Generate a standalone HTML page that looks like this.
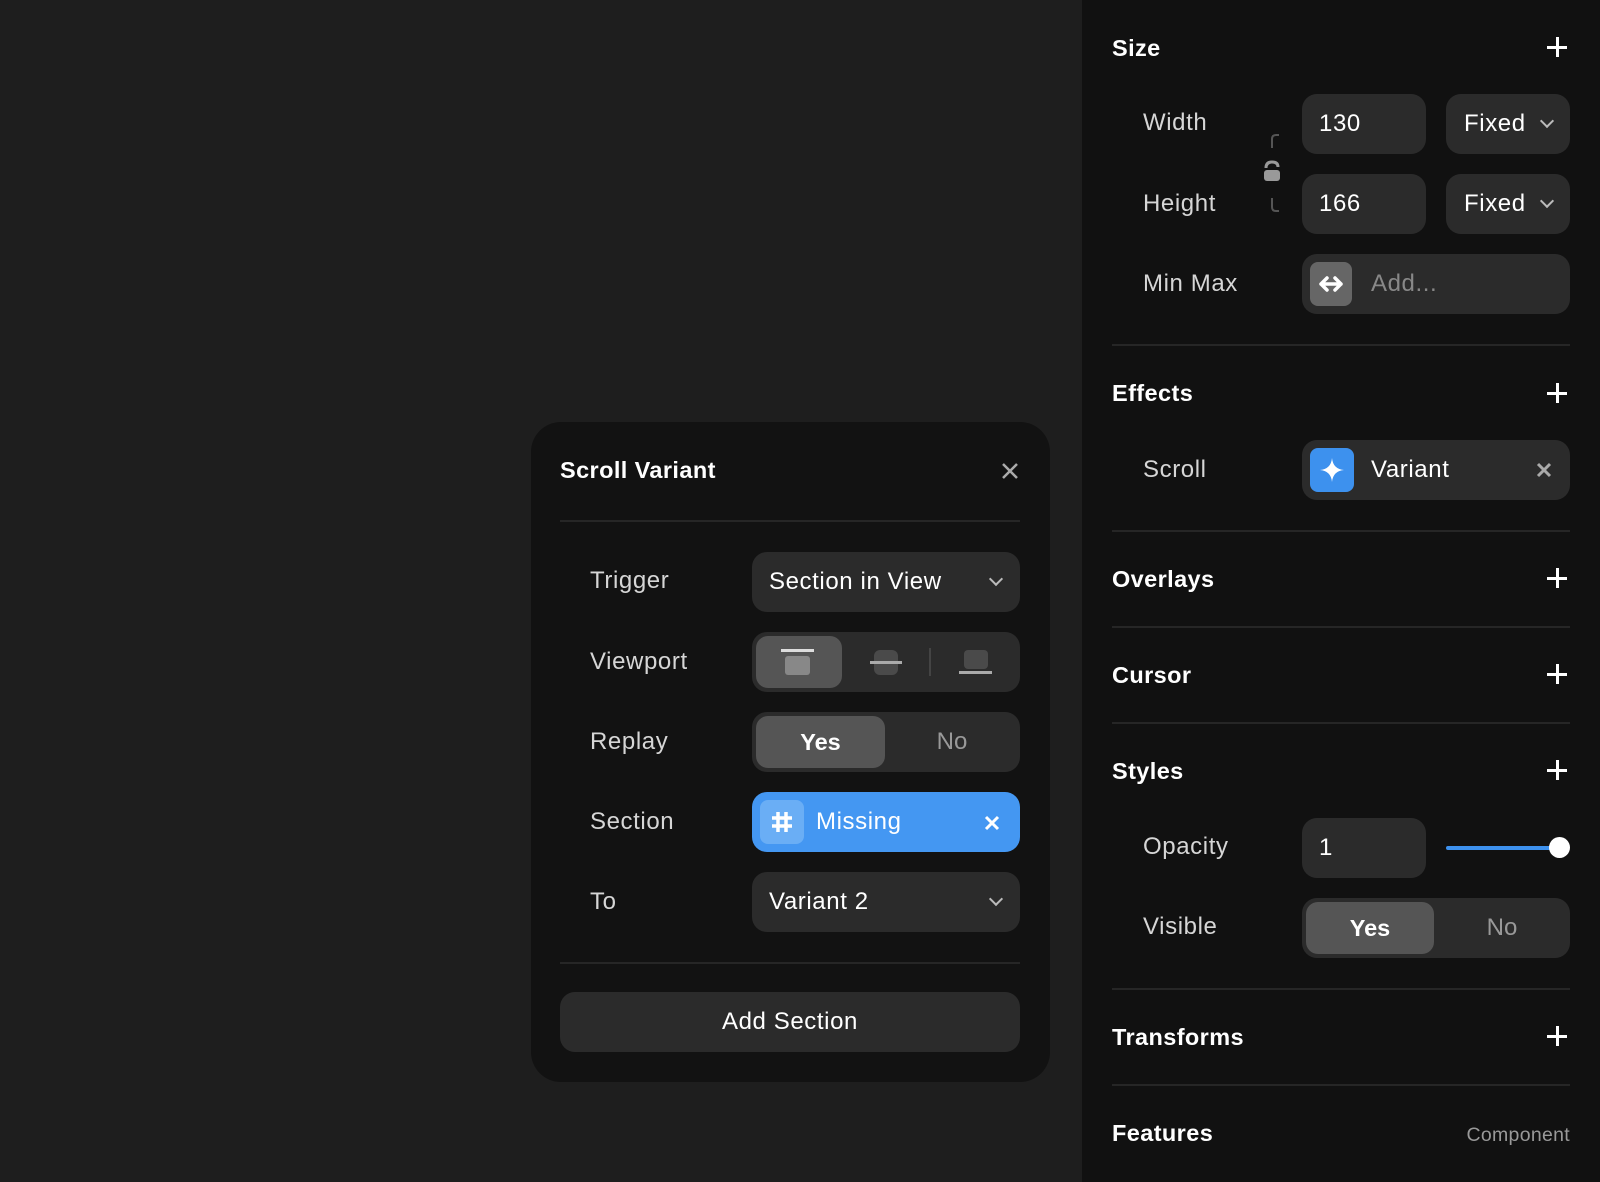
<!DOCTYPE html>
<html><head><meta charset="utf-8"><style>
*{box-sizing:border-box;margin:0;padding:0}
body{width:1600px;height:1182px;background:#1e1e1e;font-family:"Liberation Sans",sans-serif;position:relative;overflow:hidden;color:#fff}
.a{position:absolute}
.panel{left:1082px;top:0;width:518px;height:1182px;background:#111}
.h{position:absolute;font-weight:bold;font-size:23.5px;letter-spacing:0.4px;color:#fff;left:1112px;line-height:30px}
.plus{position:absolute;left:1547px;width:20px;height:20px}
.plus:before,.plus:after{content:"";position:absolute;background:#fff}
.plus:before{left:9px;top:0;width:2.5px;height:20px}
.plus:after{top:9px;left:0;height:2.5px;width:20px}
.lbl{position:absolute;font-size:24px;letter-spacing:0.6px;color:#d6d6d6;line-height:30px}
.f{position:absolute;background:#2b2b2b;border-radius:15px;font-size:24px;letter-spacing:0.6px;color:#fff;line-height:60px;padding-left:17px}
.div{position:absolute;height:2px;background:#262626}
.chev{position:absolute;width:10px;height:10px;border-right:2px solid #bbb;border-bottom:2px solid #bbb;transform:rotate(45deg)}
.seg{position:absolute;background:#2b2b2b;border-radius:15px}
.on{position:absolute;background:#555;border-radius:12px;color:#fff;font-weight:bold;font-size:23.5px;text-align:center}
.off{position:absolute;color:#999;font-size:24px;text-align:center}
</style></head><body>
<div class="a panel"></div>

<div class="h" style="top:33px">Size</div><div class="plus" style="top:37px"></div>
<div class="lbl" style="left:1143px;top:108px">Width</div>
<div class="lbl" style="left:1143px;top:189px">Height</div>
<div class="lbl" style="left:1143px;top:269px">Min Max</div>
<div class="f" style="left:1302px;top:94px;width:124px;height:60px">130</div>
<div class="f" style="left:1302px;top:174px;width:124px;height:60px">166</div>
<div class="f" style="left:1446px;top:94px;width:124px;height:60px;padding-left:18px">Fixed</div>
<div class="chev" style="left:1542px;top:116px"></div>
<div class="f" style="left:1446px;top:174px;width:124px;height:60px;padding-left:18px">Fixed</div>
<div class="chev" style="left:1542px;top:196px"></div>
<svg class="a" style="left:1262px;top:130px" width="22" height="86" viewBox="0 0 22 86"><path d="M10 18V9q0-4 4-4h3M10 68v9q0 4 4 4h3" stroke="#555" stroke-width="2" fill="none"/><path d="M4 38q0-6 6-6t6 5" stroke="#999" stroke-width="3" fill="none"/><rect x="2" y="40" width="16" height="11" rx="3" fill="#999"/></svg>
<div class="f" style="left:1302px;top:254px;width:268px;height:60px;padding-left:69px;color:#888">Add...</div>
<div class="a" style="left:1310px;top:262px;width:42px;height:44px;background:#666;border-radius:8px"></div>
<svg class="a" style="left:1316px;top:272px" width="30" height="24" viewBox="0 0 30 24"><path d="M5 12h20M11 6l-6 6 6 6M19 6l6 6-6 6" stroke="#fff" stroke-width="3.5" fill="none" stroke-linecap="round" stroke-linejoin="round"/></svg>
<div class="div" style="left:1112px;top:344px;width:458px"></div>

<div class="h" style="top:378px">Effects</div><div class="plus" style="top:383px"></div>
<div class="lbl" style="left:1143px;top:455px">Scroll</div>
<div class="f" style="left:1302px;top:440px;width:268px;height:60px;padding-left:69px">Variant</div>
<div class="a" style="left:1310px;top:448px;width:44px;height:44px;background:#3d91ee;border-radius:8px"></div>
<svg class="a" style="left:1318px;top:456px" width="28" height="28" viewBox="0 0 28 28"><path d="M14 2Q15 13 26 14Q15 15 14 26Q13 15 2 14Q13 13 14 2Z" fill="#fff"/></svg>
<svg class="a" style="left:1536px;top:462px" width="16" height="16" viewBox="0 0 16 16"><path d="M2 2l12 12M14 2L2 14" stroke="#aaa" stroke-width="3"/></svg>
<div class="div" style="left:1112px;top:530px;width:458px"></div>

<div class="h" style="top:564px">Overlays</div><div class="plus" style="top:568px"></div>
<div class="div" style="left:1112px;top:626px;width:458px"></div>
<div class="h" style="top:660px">Cursor</div><div class="plus" style="top:664px"></div>
<div class="div" style="left:1112px;top:722px;width:458px"></div>
<div class="h" style="top:756px">Styles</div><div class="plus" style="top:760px"></div>
<div class="lbl" style="left:1143px;top:832px">Opacity</div>
<div class="f" style="left:1302px;top:818px;width:124px;height:60px">1</div>
<div class="a" style="left:1446px;top:846px;width:114px;height:4px;background:#3d91ee;border-radius:2px"></div>
<div class="a" style="left:1549px;top:837px;width:21px;height:21px;background:#fff;border-radius:50%"></div>
<div class="lbl" style="left:1143px;top:912px">Visible</div>
<div class="seg" style="left:1302px;top:898px;width:268px;height:60px"></div>
<div class="on" style="left:1306px;top:902px;width:128px;height:52px;line-height:52px">Yes</div>
<div class="off" style="left:1438px;top:902px;width:128px;line-height:52px">No</div>
<div class="div" style="left:1112px;top:988px;width:458px"></div>
<div class="h" style="top:1022px">Transforms</div><div class="plus" style="top:1026px"></div>
<div class="div" style="left:1112px;top:1084px;width:458px"></div>
<div class="h" style="top:1118px">Features</div>
<div class="a" style="right:30px;top:1124px;font-size:19.5px;letter-spacing:0.3px;color:#999">Component</div>

<!-- popup -->
<div class="a" style="left:531px;top:422px;width:519px;height:660px;background:#121212;border-radius:30px"></div>
<div class="a" style="left:560px;top:457px;font-size:23.5px;letter-spacing:0.4px;font-weight:bold">Scroll Variant</div>
<svg class="a" style="left:1002px;top:463px" width="16" height="16" viewBox="0 0 16 16"><path d="M1 1l14 14M15 1L1 15" stroke="#aaa" stroke-width="2.5"/></svg>
<div class="div" style="left:560px;top:520px;width:460px"></div>
<div class="lbl" style="left:590px;top:566px">Trigger</div>
<div class="lbl" style="left:590px;top:647px">Viewport</div>
<div class="lbl" style="left:590px;top:727px">Replay</div>
<div class="lbl" style="left:590px;top:807px">Section</div>
<div class="lbl" style="left:590px;top:887px">To</div>
<div class="f" style="left:752px;top:552px;width:268px;height:60px">Section in View</div>
<div class="chev" style="left:991px;top:574px"></div>
<div class="seg" style="left:752px;top:632px;width:268px;height:60px"></div>
<div class="a" style="left:756px;top:636px;width:86px;height:52px;background:#555;border-radius:12px"></div>
<div class="a" style="left:781px;top:649px;width:33px;height:3px;background:#ddd"></div>
<div class="a" style="left:785px;top:656px;width:25px;height:19px;background:#888;border-radius:3px"></div>
<div class="a" style="left:874px;top:650px;width:24px;height:25px;background:#4a4a4a;border-radius:6px"></div>
<div class="a" style="left:870px;top:661px;width:32px;height:3px;background:#aaa"></div>
<div class="a" style="left:929px;top:648px;width:2px;height:28px;background:#444"></div>
<div class="a" style="left:964px;top:650px;width:24px;height:19px;background:#4a4a4a;border-radius:4px"></div>
<div class="a" style="left:959px;top:671px;width:33px;height:3px;background:#aaa"></div>
<div class="seg" style="left:752px;top:712px;width:268px;height:60px"></div>
<div class="on" style="left:756px;top:716px;width:129px;height:52px;line-height:52px">Yes</div>
<div class="off" style="left:888px;top:716px;width:128px;line-height:52px">No</div>
<div class="f" style="left:752px;top:792px;width:268px;height:60px;background:#4497f2;padding-left:64px">Missing</div>
<div class="a" style="left:760px;top:800px;width:44px;height:44px;background:#6aaef5;border-radius:8px"></div>
<svg class="a" style="left:770px;top:810px" width="24" height="24" viewBox="0 0 24 24"><path d="M8 2v20M16 2v20M2 8h20M2 16h20" stroke="#fff" stroke-width="3.5"/></svg>
<svg class="a" style="left:984px;top:815px" width="16" height="16" viewBox="0 0 16 16"><path d="M2 2l12 12M14 2L2 14" stroke="#fff" stroke-width="3"/></svg>
<div class="f" style="left:752px;top:872px;width:268px;height:60px">Variant 2</div>
<div class="chev" style="left:991px;top:894px"></div>
<div class="div" style="left:560px;top:962px;width:460px"></div>
<div class="f" style="left:560px;top:992px;width:460px;height:60px;padding:0;text-align:center">Add Section</div>
</body></html>
